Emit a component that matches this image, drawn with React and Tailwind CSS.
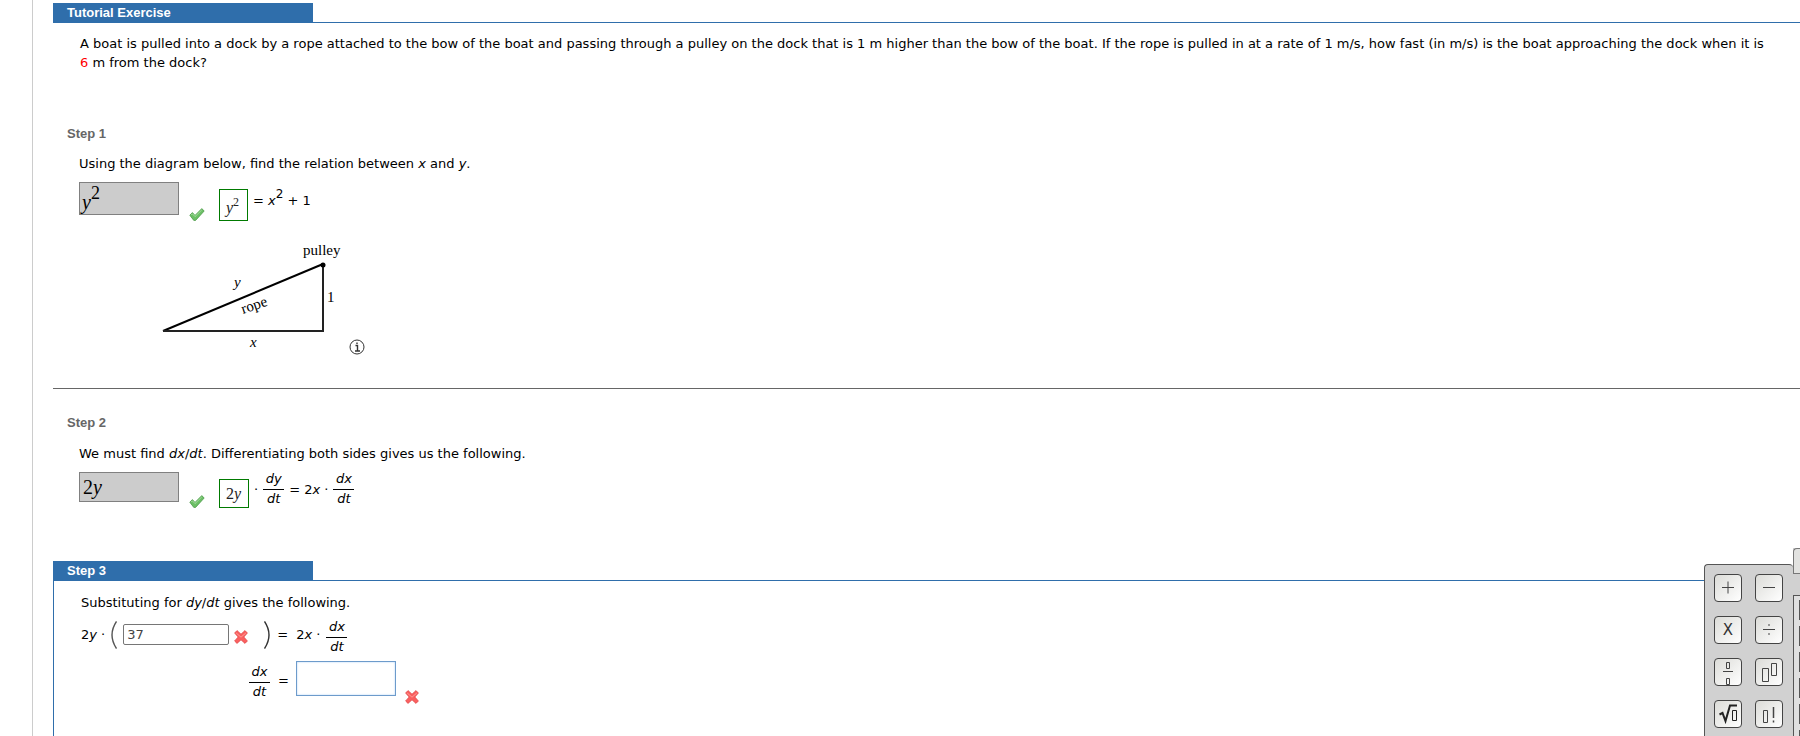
import { useState } from 'react'

const Check = () => (
  <svg width="16" height="13" viewBox="0 0 16 13" role="img" aria-label="Correct">
    <path d="M.8 7.2 3.4 4.6 6 7.4 12.8.6 15.2 3 6.6 12.4H4.8Z" fill="#6cc066" stroke="#4f9a4b" strokeWidth=".8" strokeLinejoin="round" />
    <path d="M2.2 7 3.4 5.8 6 8.6 12.8 1.9" fill="none" stroke="#a3dc9c" strokeWidth="1" />
  </svg>
)

const Cross = () => (
  <svg width="14" height="14" viewBox="0 0 14 14" role="img" aria-label="Incorrect">
    <path d="M3 .6 7 4.2 11 .6 13.4 3 9.8 7 13.4 11 11 13.4 7 9.8 3 13.4 .6 11 4.2 7 .6 3Z" fill="#fb5f5f" stroke="#e04a4a" strokeWidth=".8" strokeLinejoin="round" />
    <path d="M2.2 3 7 7.2 11.8 3" fill="none" stroke="#ff9a94" strokeWidth="1" />
  </svg>
)

const Frac = ({ top, bottom }) => (
  <span className="inline-flex w-[21px] flex-col items-center italic leading-[14px]">
    <span className="w-full border-b border-black pb-[3px] text-center">{top}</span>
    <span className="pt-0.5">{bottom}</span>
  </span>
)

const Banner = ({ children }) => (
  <div className="border-b border-[#2f6eab]">
    <h2 className="h-[19px] w-[260px] bg-[#2f6eab] pl-3.5 font-['Liberation_Sans',Arial,sans-serif] text-[13px] font-bold leading-[19px] text-white">
      {children}
    </h2>
  </div>
)

const StepTitle = ({ children }) => (
  <h2 className="pl-3.5 font-['Liberation_Sans',Arial,sans-serif] text-[13px] font-bold leading-4 text-[#666]">{children}</h2>
)

const Triangle = () => (
  <svg width="186" height="114" viewBox="0 0 186 114" className="font-['Liberation_Serif',serif] text-[15px]">
    <path d="M3 90 163 23" stroke="#000" strokeWidth="2" />
    <path d="M3 90H163V23" fill="none" stroke="#222" strokeWidth="2" />
    <circle cx="163" cy="24" r="2.5" />
    <text x="143" y="14">pulley</text>
    <text x="74" y="46" fontStyle="italic">y</text>
    <text x="83" y="73" transform="rotate(-19 83 73)">rope</text>
    <text x="167" y="61">1</text>
    <text x="90" y="106" fontStyle="italic">x</text>
  </svg>
)

const keys = [
  { name: 'plus', face: <path d="M7 13.5H19M13 7.5V19.5" /> },
  { name: 'minus', face: <path d="M7 13.5H19" /> },
  { name: 'times', text: 'X' },
  { name: 'divide', face: <path d="M7 13.5H19M12 9H14M12 18H14" /> },
  { name: 'fraction', face: <path d="M8 13.5H18M11.5 4.5H14.5V10.5H11.5ZM11.5 20.5H14.5V26.5H11.5Z" /> },
  { name: 'power', face: <path d="M6.5 10.5H12.5V23.5H6.5ZM15.5 5.5H20.5V17.5H15.5Z" /> },
  { name: 'square root', face: <><path d="M4.5 14.5 7.5 13 10.5 21 15 5.5H22" stroke="#222" strokeWidth="2" /><path d="M17.5 10.5H21.5V20.5H17.5Z" stroke="#222" /></> },
  { name: 'factorial', face: <><path d="M7.5 10.5H11.5V22.5H7.5Z" /><path d="M17.5 7V18M17.5 20.5V22.5" strokeWidth="1.5" /></> },
]

const Palette = () => (
  <div className="absolute bottom-0 right-0 top-[548px] flex overflow-hidden">
    <div className="mt-4 w-[89px] overflow-hidden rounded-t border-l border-t border-[#555] bg-[#d1d1d1]">
      <div className="grid grid-cols-[28px_28px] gap-x-[13px] gap-y-3.5 pl-[9px] pt-[9px]">
        {keys.map((k) => (
          <button
            key={k.name}
            type="button"
            aria-label={k.name}
            className="flex size-7 items-center justify-center rounded border border-[#444] bg-linear-to-br from-[#dcdcd8] to-white text-[15px] text-[#333]"
          >
            {k.text || (
              <svg width="26" height="28" viewBox="0 0 26 28" className="shrink-0" fill="none" stroke="#444">
                {k.face}
              </svg>
            )}
          </button>
        ))}
      </div>
    </div>
    <div className="flex w-[7px] flex-col bg-[#d1d1d1]">
      <div className="h-[26px] rounded-tl border-b border-l border-t border-[#777] bg-[#e2e2e0]" />
      <div className="h-[21px]" />
      <div className="flex flex-1 flex-col items-end gap-1.5 overflow-hidden border-l border-t border-[#555] bg-[#e0e0e0] pt-1">
        {[0, 1, 2, 3, 4, 5].map((n) => (
          <div key={n} className="h-5 w-px shrink-0 bg-[#555]" />
        ))}
      </div>
    </div>
  </div>
)

export default function App() {
  const [rate, setRate] = useState('37')
  const [answer, setAnswer] = useState('')

  return (
    <div className="relative overflow-hidden bg-white pl-8 font-['DejaVu_Sans',Verdana,sans-serif] text-[13px] leading-[19px] text-black">
      <main className="flex min-h-screen flex-col border-l border-[#ccc] pl-5 pt-[3px]">
        <section>
          <Banner>Tutorial Exercise</Banner>
          <p className="pl-[27px] pr-7 pt-[11px]">
            A boat is pulled into a dock by a rope attached to the bow of the boat and passing through a pulley on the dock that is 1 m higher than the bow of the boat. If the rope is pulled in at a rate of 1 m/s, how fast (in m/s) is the boat approaching the dock when it is <span className="text-[#f00]">6</span> m from the dock?
          </p>
        </section>

        <section className="border-b border-[#666] pb-[33px] pt-[54px]">
          <StepTitle>Step 1</StepTitle>
          <div className="pl-[26px]">
            <p className="pt-3">Using the diagram below, find the relation between <i>x</i> and <i>y</i>.</p>
            <div className="flex h-[50px] items-start pt-[9px]">
              <div className="h-[33px] w-[100px] border border-[#808080] bg-[#ccc] pl-0.5 font-['Liberation_Serif',serif] text-[20px] leading-[38px]">
                <i>y</i><span className="align-[10px] text-[18px] leading-none">2</span>
              </div>
              <span className="pl-2.5 pt-[26px]"><Check /></span>
              <span className="ml-3.5 mt-[7px] h-8 w-[29px] border border-[#007a00] pl-1.5 font-['Liberation_Serif',serif] text-[16px] leading-9 text-[#222]"><i>y</i><span className="align-[7px] text-[12px] leading-none">2</span></span>
              <span className="pl-[5px] pt-1.5">= <i>x</i><span className="align-[7px] text-[12px] leading-none">2</span> + 1</span>
            </div>
            <div className="flex items-end gap-[3px] pl-[81px] pt-[18px]">
              <Triangle />
              <svg width="16" height="16" viewBox="0 0 16 16" role="img" aria-label="Image description" fill="none" stroke="#333">
                <circle cx="8" cy="8" r="7" />
                <path d="M6.5 6.5H8.5V12M6 12H11M8 3.5V5" strokeWidth="1.4" />
              </svg>
            </div>
          </div>
        </section>

        <section className="pt-[26px]">
          <StepTitle>Step 2</StepTitle>
          <div className="pl-[26px]">
            <p className="pt-[13px]">We must find <i>dx</i>/<i>dt</i>. Differentiating both sides gives us the following.</p>
            <div className="flex items-start pt-[9px]">
              <div className="h-[30px] w-[100px] border border-[#808080] bg-[#ccc] pl-[3px] font-['Liberation_Serif',serif] text-[20px] leading-7">2<i>y</i></div>
              <span className="pl-2.5 pt-[23px]"><Check /></span>
              <span className="ml-3.5 mt-[7px] h-[29px] w-[30px] border border-[#007a00] pl-1.5 font-['Liberation_Serif',serif] text-[16px] leading-7 text-[#222]">2<i>y</i></span>
              <span className="flex items-center gap-[5px] pl-[5px]"><span>·</span><Frac top="dy" bottom="dt" /><span>= 2<i>x</i> ·</span><Frac top="dx" bottom="dt" /></span>
            </div>
          </div>
        </section>

        <section className="flex flex-1 flex-col pt-[53px]">
          <Banner>Step 3</Banner>
          <div className="flex-1 border-l border-[#2f6eab] pl-[27px] pt-3">
            <p>Substituting for <i>dy</i>/<i>dt</i> gives the following.</p>
            <div className="flex items-center pt-[3px]">
              <span>2<i>y</i> ·</span>
              <svg width="6" height="28" viewBox="0 0 6 28" className="ml-1.5" fill="none" stroke="#555"><path d="M5.5.5Q-3.5 14 5.5 27.5" strokeWidth="1.4" /></svg>
              <input aria-label="dy/dt" value={rate} onChange={(e) => setRate(e.target.value)} className="ml-1.5 h-[21px] w-[106px] rounded-xs border border-[#767676] pl-[3px] text-[13px] text-[#444] outline-none" />
              <span className="pl-[5px] pt-1"><Cross /></span>
              <svg width="6" height="28" viewBox="0 0 6 28" className="ml-4" fill="none" stroke="#333"><path d="M.5.5Q9.5 14 .5 27.5" strokeWidth="1.4" /></svg>
              <span className="pl-[7px]">=</span>
              <span className="pl-2 pr-1.5">2<i>x</i> ·</span>
              <span className="pt-0.5"><Frac top="dx" bottom="dt" /></span>
            </div>
            <div className="flex items-start pl-[168px] pt-[7px]">
              <span className="flex pt-1"><Frac top="dx" bottom="dt" /></span>
              <span className="pl-2 pr-[7px] pt-2.5">=</span>
              <input aria-label="dx/dt" value={answer} onChange={(e) => setAnswer(e.target.value)} className="h-[35px] w-[100px] border border-[#6d9bcb] px-1 shadow-[inset_0_0_2px_#a8cdf5] outline-none" />
              <span className="pl-[9px] pt-[29px]"><Cross /></span>
            </div>
          </div>
        </section>
      </main>
      <Palette />
    </div>
  )
}
